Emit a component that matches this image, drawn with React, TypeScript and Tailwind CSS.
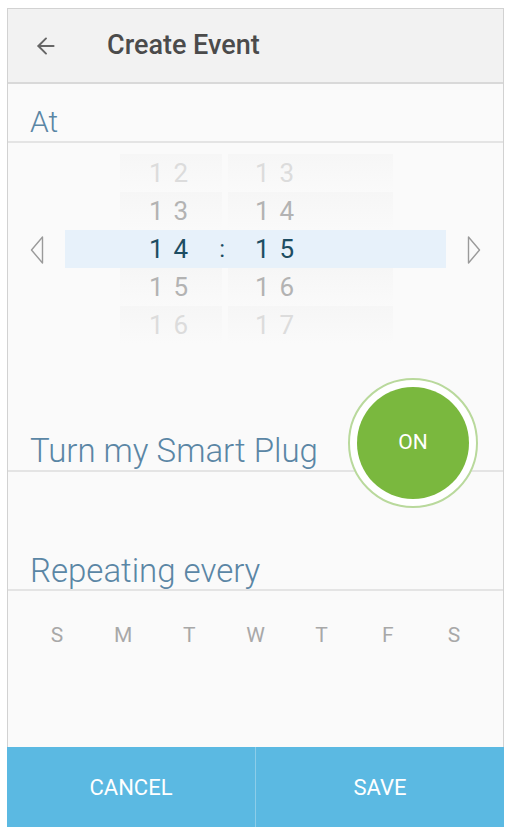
import { ArrowLeft } from "lucide-react";

const hours = ["12", "13", "14", "15", "16"];
const minutes = ["13", "14", "15", "16", "17"];
const days = ["S", "M", "T", "W", "T", "F", "S"];

// fade of the wheel rows, top to bottom
const rowText = [
  "text-[#dcdcdc]",
  "text-[#b3b3b3]",
  "text-[#1d4d62]",
  "text-[#b3b3b3]",
  "text-[#dcdcdc]",
];

function Triangle({ dir }: { dir: "left" | "right" }) {
  return (
    <svg width="14" height="30" viewBox="0 0 14 30" fill="none">
      {dir === "left" ? (
        <path d="M12.5 2 L1.5 15 L12.5 28 Z" stroke="#9a9a9a" strokeWidth="1.4" strokeLinejoin="round" />
      ) : (
        <path d="M1.5 2 L12.5 15 L1.5 28 Z" stroke="#9a9a9a" strokeWidth="1.4" strokeLinejoin="round" />
      )}
    </svg>
  );
}

function TimeWheel() {
  return (
    <div className="flex items-start pt-[11px] h-[201px]">
      <div className="w-[57px] h-[190px] flex items-center pl-[22px] pt-[2px]">
        <Triangle dir="left" />
      </div>
      <div className="w-[381px] flex flex-col">
        {hours.map((h, i) => (
          <div
            key={h}
            className={
              "flex h-[38px] items-center " + (i === 2 ? "bg-[#e7f1fa]" : "")
            }
          >
            <div
              className={
                "relative ml-[55px] w-[102px] h-full flex items-center pl-[29px] " +
                (i === 2 ? "" : "bg-gradient-to-b from-[#f6f6f6] via-[#f8f8f8] to-[#fafafa]")
              }
            >
              <span className={"text-[26px] tracking-[10px] " + rowText[i]}>{h}</span>
              {i === 2 && (
                <span className="absolute right-[-3px] text-[24px] text-[#1d4d62]">:</span>
              )}
            </div>
            <div
              className={
                "ml-[6px] w-[165px] h-full flex items-center pl-[27px] " +
                (i === 2 ? "" : "bg-gradient-to-b from-[#f6f6f6] via-[#f8f8f8] to-[#fafafa]")
              }
            >
              <span className={"text-[26px] tracking-[10px] " + rowText[i]}>{minutes[i]}</span>
            </div>
          </div>
        ))}
      </div>
      <div className="w-[57px] h-[190px] flex items-center pl-[21px] pt-[2px]">
        <Triangle dir="right" />
      </div>
    </div>
  );
}

export default function App() {
  return (
    <div
      className="w-[512px] h-[831px] bg-white pt-[8px] pl-[7px] overflow-hidden"
      style={{ fontFamily: "Roboto, 'Noto Sans', sans-serif" }}
    >
      <div className="w-[497px] h-[819px] border-x border-t border-[#d2d2d2] bg-[#fafafa] flex flex-col">
        <header className="h-[75px] shrink-0 bg-[#f2f2f2] border-b-2 border-[#d9d9d9] flex items-center">
          <ArrowLeft className="ml-[25px] h-[26px] w-[26px] text-[#666]" strokeWidth={1.8} />
          <h1 className="ml-[48px] text-[27px] font-medium text-[#4b4b4b]">Create Event</h1>
        </header>

        <div className="h-[59px] shrink-0 flex items-end pl-[22px] pb-[3px] border-b-2 border-[#e4e4e4]">
          <span className="text-[30px] leading-[32px] font-light text-[#5a86a5]">At</span>
        </div>

        <TimeWheel />

        <div className="relative h-[128px] shrink-0 flex items-end pl-[22px] pb-[3px] border-b-2 border-[#e4e4e4]">
          <span className="text-[33px] leading-[32px] font-light text-[#5a86a5]">Turn my Smart Plug</span>
          <div className="absolute left-[340px] top-[34px] w-[130px] h-[130px] rounded-full bg-white border-2 border-[#b9d99c] flex items-center justify-center">
            <div className="w-[112px] h-[112px] rounded-full bg-[#7ab83e] flex items-center justify-center">
              <span className="text-[21px] text-white">ON</span>
            </div>
          </div>
        </div>

        <div className="h-[119px] shrink-0 flex items-end pl-[22px] pb-[2px] border-b-2 border-[#e4e4e4]">
          <span className="text-[33px] leading-[32px] font-light text-[#5a86a5]">Repeating every</span>
        </div>

        <div className="flex-1 grid grid-cols-7 px-[16px] content-start pt-[32px]">
          {days.map((d, i) => (
            <span key={i} className="text-center text-[21px] leading-[24px] text-[#a8a8a8]">
              {d}
            </span>
          ))}
        </div>

        <div className="h-[80px] shrink-0 -mx-px flex bg-[#5bb9e2]">
          <button className="w-[249px] border-r border-[#8ccde9] text-white text-[22px]">CANCEL</button>
          <button className="flex-1 text-white text-[22px]">SAVE</button>
        </div>
      </div>
    </div>
  );
}
